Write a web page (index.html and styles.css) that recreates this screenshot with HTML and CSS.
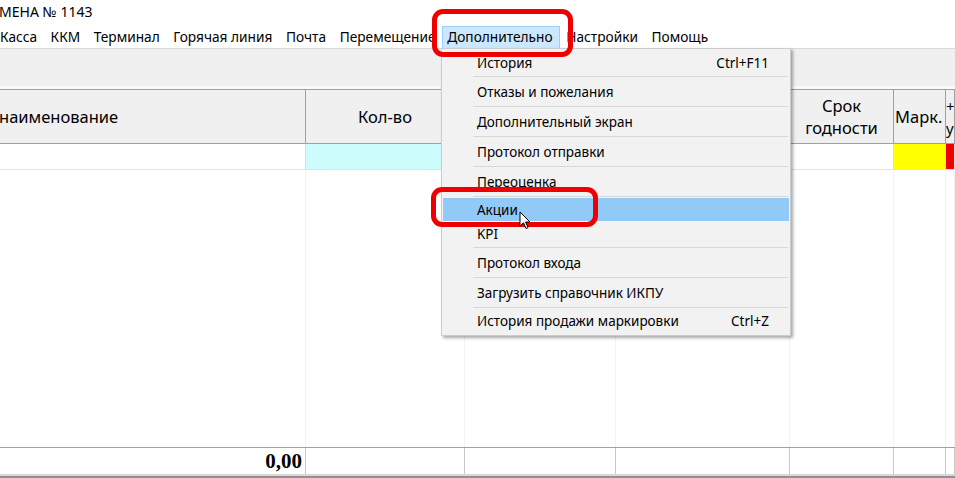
FILE: index.html
```html
<!DOCTYPE html>
<html lang="ru">
<head>
    <meta charset="UTF-8">
    <title>Касса</title>
    <link rel="stylesheet" href="styles.css">
</head>
<body>
    <div class="window">
        <div class="title">МЕНА № 1143</div>

        <div class="menubar">
            <span class="menu-item first">Касса</span>
            <span class="menu-item">ККМ</span>
            <span class="menu-item">Терминал</span>
            <span class="menu-item">Горячая линия</span>
            <span class="menu-item">Почта</span>
            <span class="menu-item">Перемещение</span>
            <span class="menu-item open">Дополнительно</span>
            <span class="menu-item">Настройки</span>
            <span class="menu-item">Помощь</span>
        </div>

        <div class="toolbar"></div>

        <div class="grid">
            <div class="row head">
                <div class="cell name">наименование</div>
                <div class="cell center">Кол-во</div>
                <div class="cell"></div>
                <div class="cell"></div>
                <div class="cell center two">Срок<br>годности</div>
                <div class="cell mark">Марк.</div>
                <div class="cell last">+<br>у</div>
            </div>
            <div class="row data">
                <div class="cell"></div>
                <div class="cell cyan"></div>
                <div class="cell"></div>
                <div class="cell"></div>
                <div class="cell"></div>
                <div class="cell yellow"></div>
                <div class="cell red"></div>
            </div>
            <div class="row fill">
                <div class="cell"></div>
                <div class="cell"></div>
                <div class="cell"></div>
                <div class="cell"></div>
                <div class="cell"></div>
                <div class="cell"></div>
                <div class="cell"></div>
            </div>
            <div class="row total">
                <div class="cell sum">0,00</div>
                <div class="cell"></div>
                <div class="cell"></div>
                <div class="cell"></div>
                <div class="cell"></div>
                <div class="cell"></div>
                <div class="cell"></div>
            </div>
        </div>

        <div class="dropdown">
            <div class="dd-item top"><span>История</span><span class="key">Ctrl+F11</span></div>
            <div class="dd-item"><span>Отказы и пожелания</span></div>
            <div class="dd-item"><span>Дополнительный экран</span></div>
            <div class="dd-item"><span>Протокол отправки</span></div>
            <div class="dd-item"><span>Переоценка</span></div>
            <div class="dd-item hover"><span>Акции</span></div>
            <div class="dd-item kpi"><span>KPI</span></div>
            <div class="dd-item"><span>Протокол входа</span></div>
            <div class="dd-item"><span>Загрузить справочник ИКПУ</span></div>
            <div class="dd-item bottom"><span>История продажи маркировки</span><span class="key">Ctrl+Z</span></div>
        </div>

        <div class="mark-box box-menu"></div>
        <div class="mark-box box-item"></div>

        <svg class="cursor" width="13" height="20" viewBox="0 0 13 20">
            <path d="M1 1 L1 15 L4.5 11.8 L7 17.5 L9 16.6 L6.6 11 L11 11 Z" fill="#fff" stroke="#000" stroke-width="1" stroke-linejoin="round"/>
        </svg>
    </div>
</body>
</html>
```

FILE: styles.css
```css
body {
    margin: 0;
    background: #fff;
    font-family: 'Noto Sans', 'Open Sans', sans-serif;
    color: #000;
}
.window {
    position: relative;
    width: 955px;
    height: 478px;
    overflow: hidden;
}
.title {
    height: 26px;
    line-height: 24px;
    font-size: 14px;
    margin-left: -1px;
}
.menubar {
    display: flex;
    height: 22px;
    align-items: center;
    font-size: 13.7px;
    border-bottom: 1px solid #dadada;
}
.menu-item {
    padding: 1px 5.8px;
    height: 19px;
    line-height: 18px;
    border: 1px solid transparent;
}
.menu-item.first {
    padding-left: 0;
    margin-left: -1px;
}
.menu-item.open {
    background: #cce8ff;
    border-color: #99d1ff;
    padding: 1px 6px 1px 4px;
}
.toolbar {
    height: 37px;
    background: #f0f0f0;
    border-bottom: 3px solid #f9f9f9;
}

/* grid */
.row {
    display: grid;
    grid-template-columns: 306px 159px 151px 174px 104px 52px 9px;
}
.cell {
    border-right: 1px solid #c8c8c8;
    overflow: hidden;
    white-space: nowrap;
}
.head {
    height: 53px;
    background: #f0f0f0;
    border-top: 1px solid #a0a0a0;
    border-bottom: 1px solid #a0a0a0;
    font-size: 16.5px;
}
.head .cell {
    border-right-color: #a0a0a0;
    display: flex;
    align-items: center;
    line-height: 22px;
}
.head .name {
    margin-left: -1px;
}
.head .center {
    justify-content: center;
    text-align: center;
}
.head .mark {
    padding-left: 1px;
}
.head .last {
    padding-left: 0;
    font-size: 15px;
}
.data {
    height: 25px;
    border-bottom: 1px solid #e2e2e2;
}
.data .cell {
    border-right-color: #dcdcdc;
}
.cyan {
    background: #ccfcfc;
}
.yellow {
    background: #ffff00;
}
.red {
    background: #f00000;
}
.fill {
    height: 277px;
}
.fill .cell {
    border-right-color: #f3f3f3;
}
.total {
    height: 26px;
    border-top: 1px solid #a0a0a0;
    border-bottom: 2px solid #d8d8d8;
    box-shadow: 0 2px 0 #909090;
}
.sum {
    font-family: 'Liberation Serif', serif;
    font-weight: bold;
    font-size: 21px;
    text-align: right;
    padding-right: 3px;
    line-height: 26px;
}

/* dropdown menu */
.dropdown {
    position: absolute;
    left: 441px;
    top: 48px;
    width: 348px;
    height: 286px;
    background: #f2f2f2;
    border: 1px solid #cccccc;
    box-shadow: 2px 2px 3px rgba(0,0,0,0.35);
    font-size: 13.5px;
}
.dd-item {
    display: flex;
    justify-content: space-between;
    align-items: center;
    height: 29px;
    margin-left: 31px;
    margin-right: 2px;
    padding: 0 19px 0 4px;
    border-bottom: 1px solid #d8d8d8;
}
.dd-item.top {
    height: 27px;
}
.dd-item.hover {
    margin: 1px 1px 0 1px;
    padding-left: 34px;
    height: 23px;
    background: #91c9f7;
    border-bottom: none;
}
.dd-item.kpi {
    height: 26px;
}
.dd-item.bottom {
    height: 26px;
    border-bottom: none;
}

/* annotation frames */
.mark-box {
    position: absolute;
    border: 5px solid #ee0000;
    border-radius: 11px;
}
.box-menu {
    left: 432px;
    top: 9px;
    width: 131px;
    height: 38px;
}
.box-item {
    left: 431px;
    top: 187px;
    width: 157px;
    height: 30px;
}
.cursor {
    position: absolute;
    left: 519px;
    top: 211px;
}
```
